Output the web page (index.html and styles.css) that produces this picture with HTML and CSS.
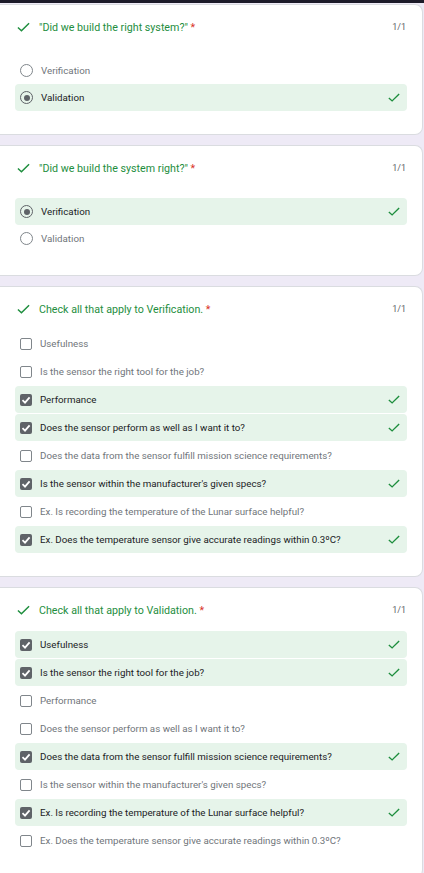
FILE: index.html
```html
<!DOCTYPE html>
<html>
<head>
<meta charset="utf-8">
<link rel="stylesheet" href="styles.css">
</head>
<body>
<div class="topbar"></div>
<main class="page">

<section class="card">
  <div class="q-head">
    <svg class="q-check" viewBox="0 0 14 10"><polyline points="1,5.5 4.8,9 13,1"/></svg>
    <div class="q-title">"Did we build the right system?" <span class="req">*</span></div>
    <div class="score">1/1</div>
  </div>
  <div class="opts opts-radio">
    <div class="opt"><span class="radio"></span><span class="label">Verification</span></div>
    <div class="opt correct"><span class="radio on"></span><span class="label">Validation</span><svg class="ok" viewBox="0 0 14 10"><polyline points="1,5.5 4.8,9 13,1"/></svg></div>
  </div>
</section>

<section class="card">
  <div class="q-head">
    <svg class="q-check" viewBox="0 0 14 10"><polyline points="1,5.5 4.8,9 13,1"/></svg>
    <div class="q-title">"Did we build the system right?" <span class="req">*</span></div>
    <div class="score">1/1</div>
  </div>
  <div class="opts opts-radio">
    <div class="opt correct"><span class="radio on"></span><span class="label">Verification</span><svg class="ok" viewBox="0 0 14 10"><polyline points="1,5.5 4.8,9 13,1"/></svg></div>
    <div class="opt"><span class="radio"></span><span class="label">Validation</span></div>
  </div>
</section>

<section class="card">
  <div class="q-head">
    <svg class="q-check" viewBox="0 0 14 10"><polyline points="1,5.5 4.8,9 13,1"/></svg>
    <div class="q-title">Check all that apply to Verification. <span class="req">*</span></div>
    <div class="score">1/1</div>
  </div>
  <div class="opts opts-check">
    <div class="opt"><span class="box"></span><span class="label">Usefulness</span></div>
    <div class="opt"><span class="box"></span><span class="label">Is the sensor the right tool for the job?</span></div>
    <div class="opt correct"><span class="box on"><svg viewBox="0 0 12 12"><polyline points="2.5,6.2 5,8.6 9.6,3.4"/></svg></span><span class="label">Performance</span><svg class="ok" viewBox="0 0 14 10"><polyline points="1,5.5 4.8,9 13,1"/></svg></div>
    <div class="opt correct"><span class="box on"><svg viewBox="0 0 12 12"><polyline points="2.5,6.2 5,8.6 9.6,3.4"/></svg></span><span class="label">Does the sensor perform as well as I want it to?</span><svg class="ok" viewBox="0 0 14 10"><polyline points="1,5.5 4.8,9 13,1"/></svg></div>
    <div class="opt"><span class="box"></span><span class="label">Does the data from the sensor fulfill mission science requirements?</span></div>
    <div class="opt correct"><span class="box on"><svg viewBox="0 0 12 12"><polyline points="2.5,6.2 5,8.6 9.6,3.4"/></svg></span><span class="label">Is the sensor within the manufacturer's given specs?</span><svg class="ok" viewBox="0 0 14 10"><polyline points="1,5.5 4.8,9 13,1"/></svg></div>
    <div class="opt"><span class="box"></span><span class="label">Ex. Is recording the temperature of the Lunar surface helpful?</span></div>
    <div class="opt correct"><span class="box on"><svg viewBox="0 0 12 12"><polyline points="2.5,6.2 5,8.6 9.6,3.4"/></svg></span><span class="label">Ex. Does the temperature sensor give accurate readings within 0.3ºC?</span><svg class="ok" viewBox="0 0 14 10"><polyline points="1,5.5 4.8,9 13,1"/></svg></div>
  </div>
</section>

<section class="card">
  <div class="q-head">
    <svg class="q-check" viewBox="0 0 14 10"><polyline points="1,5.5 4.8,9 13,1"/></svg>
    <div class="q-title">Check all that apply to Validation. <span class="req">*</span></div>
    <div class="score">1/1</div>
  </div>
  <div class="opts opts-check">
    <div class="opt correct"><span class="box on"><svg viewBox="0 0 12 12"><polyline points="2.5,6.2 5,8.6 9.6,3.4"/></svg></span><span class="label">Usefulness</span><svg class="ok" viewBox="0 0 14 10"><polyline points="1,5.5 4.8,9 13,1"/></svg></div>
    <div class="opt correct"><span class="box on"><svg viewBox="0 0 12 12"><polyline points="2.5,6.2 5,8.6 9.6,3.4"/></svg></span><span class="label">Is the sensor the right tool for the job?</span><svg class="ok" viewBox="0 0 14 10"><polyline points="1,5.5 4.8,9 13,1"/></svg></div>
    <div class="opt"><span class="box"></span><span class="label">Performance</span></div>
    <div class="opt"><span class="box"></span><span class="label">Does the sensor perform as well as I want it to?</span></div>
    <div class="opt correct"><span class="box on"><svg viewBox="0 0 12 12"><polyline points="2.5,6.2 5,8.6 9.6,3.4"/></svg></span><span class="label">Does the data from the sensor fulfill mission science requirements?</span><svg class="ok" viewBox="0 0 14 10"><polyline points="1,5.5 4.8,9 13,1"/></svg></div>
    <div class="opt"><span class="box"></span><span class="label">Is the sensor within the manufacturer's given specs?</span></div>
    <div class="opt correct"><span class="box on"><svg viewBox="0 0 12 12"><polyline points="2.5,6.2 5,8.6 9.6,3.4"/></svg></span><span class="label">Ex. Is recording the temperature of the Lunar surface helpful?</span><svg class="ok" viewBox="0 0 14 10"><polyline points="1,5.5 4.8,9 13,1"/></svg></div>
    <div class="opt"><span class="box"></span><span class="label">Ex. Does the temperature sensor give accurate readings within 0.3ºC?</span></div>
  </div>
</section>

</main>
</body>
</html>
```

FILE: styles.css
```css
html, body {
  margin: 0;
  padding: 0;
}
body {
  background: #eeeaf6;
  font-family: Roboto, "Noto Sans", "Liberation Sans", sans-serif;
  color: #202124;
}
.topbar {
  height: 3px;
  background: #1d1b29;
}
.page {
  display: flex;
  flex-direction: column;
  gap: 10px;
  padding-top: 1px;
}
.card {
  background: #fff;
  width: 423px;
  box-sizing: border-box;
  border: 1px solid #dadce0;
  border-left: none;
  border-radius: 0 8px 8px 0;
  padding: 14px 15px 23px 15px;
}
.q-head {
  display: flex;
  align-items: center;
  height: 16px;
  padding-left: 2px;
}
.q-check {
  width: 13px;
  height: 10px;
  margin-right: 9px;
  flex: none;
}
.q-check polyline, .ok polyline {
  fill: none;
  stroke: #1e8e3e;
  stroke-width: 1.6;
}
.q-title {
  flex: 1;
  font-size: 10.7px;
  color: #1e8e3e;
}
.req {
  color: #d93025;
}
.score {
  font-size: 9px;
  color: #5f6368;
  padding-right: 1px;
}
.opts {
  display: flex;
  flex-direction: column;
}
.opts-radio {
  margin-top: 22px;
}
.opts-check {
  margin-top: 13px;
  gap: 1px;
}
.opt {
  display: flex;
  align-items: center;
  height: 27px;
  padding: 0 7px 0 5px;
  border-radius: 4px;
}
.opt.correct {
  background: #e6f4ea;
}
.label {
  flex: 1;
  font-size: 9.75px;
  color: #70757a;
}
.correct .label {
  color: #202124;
}
.radio {
  width: 13px;
  height: 13px;
  box-sizing: border-box;
  border: 1.5px solid #80868b;
  border-radius: 50%;
  margin-right: 8px;
  flex: none;
  display: flex;
  align-items: center;
  justify-content: center;
}
.radio.on {
  border-color: #5f6368;
}
.radio.on::after {
  content: "";
  width: 6px;
  height: 6px;
  border-radius: 50%;
  background: #5f6368;
}
.box {
  width: 12px;
  height: 12px;
  box-sizing: border-box;
  border: 1.5px solid #80868b;
  border-radius: 2px;
  margin-right: 8px;
  flex: none;
  display: flex;
}
.box.on {
  background: #5f6368;
  border: none;
}
.box svg {
  width: 12px;
  height: 12px;
}
.box svg polyline {
  fill: none;
  stroke: #fff;
  stroke-width: 1.8;
}
.ok {
  width: 12px;
  height: 9px;
  flex: none;
}
```
